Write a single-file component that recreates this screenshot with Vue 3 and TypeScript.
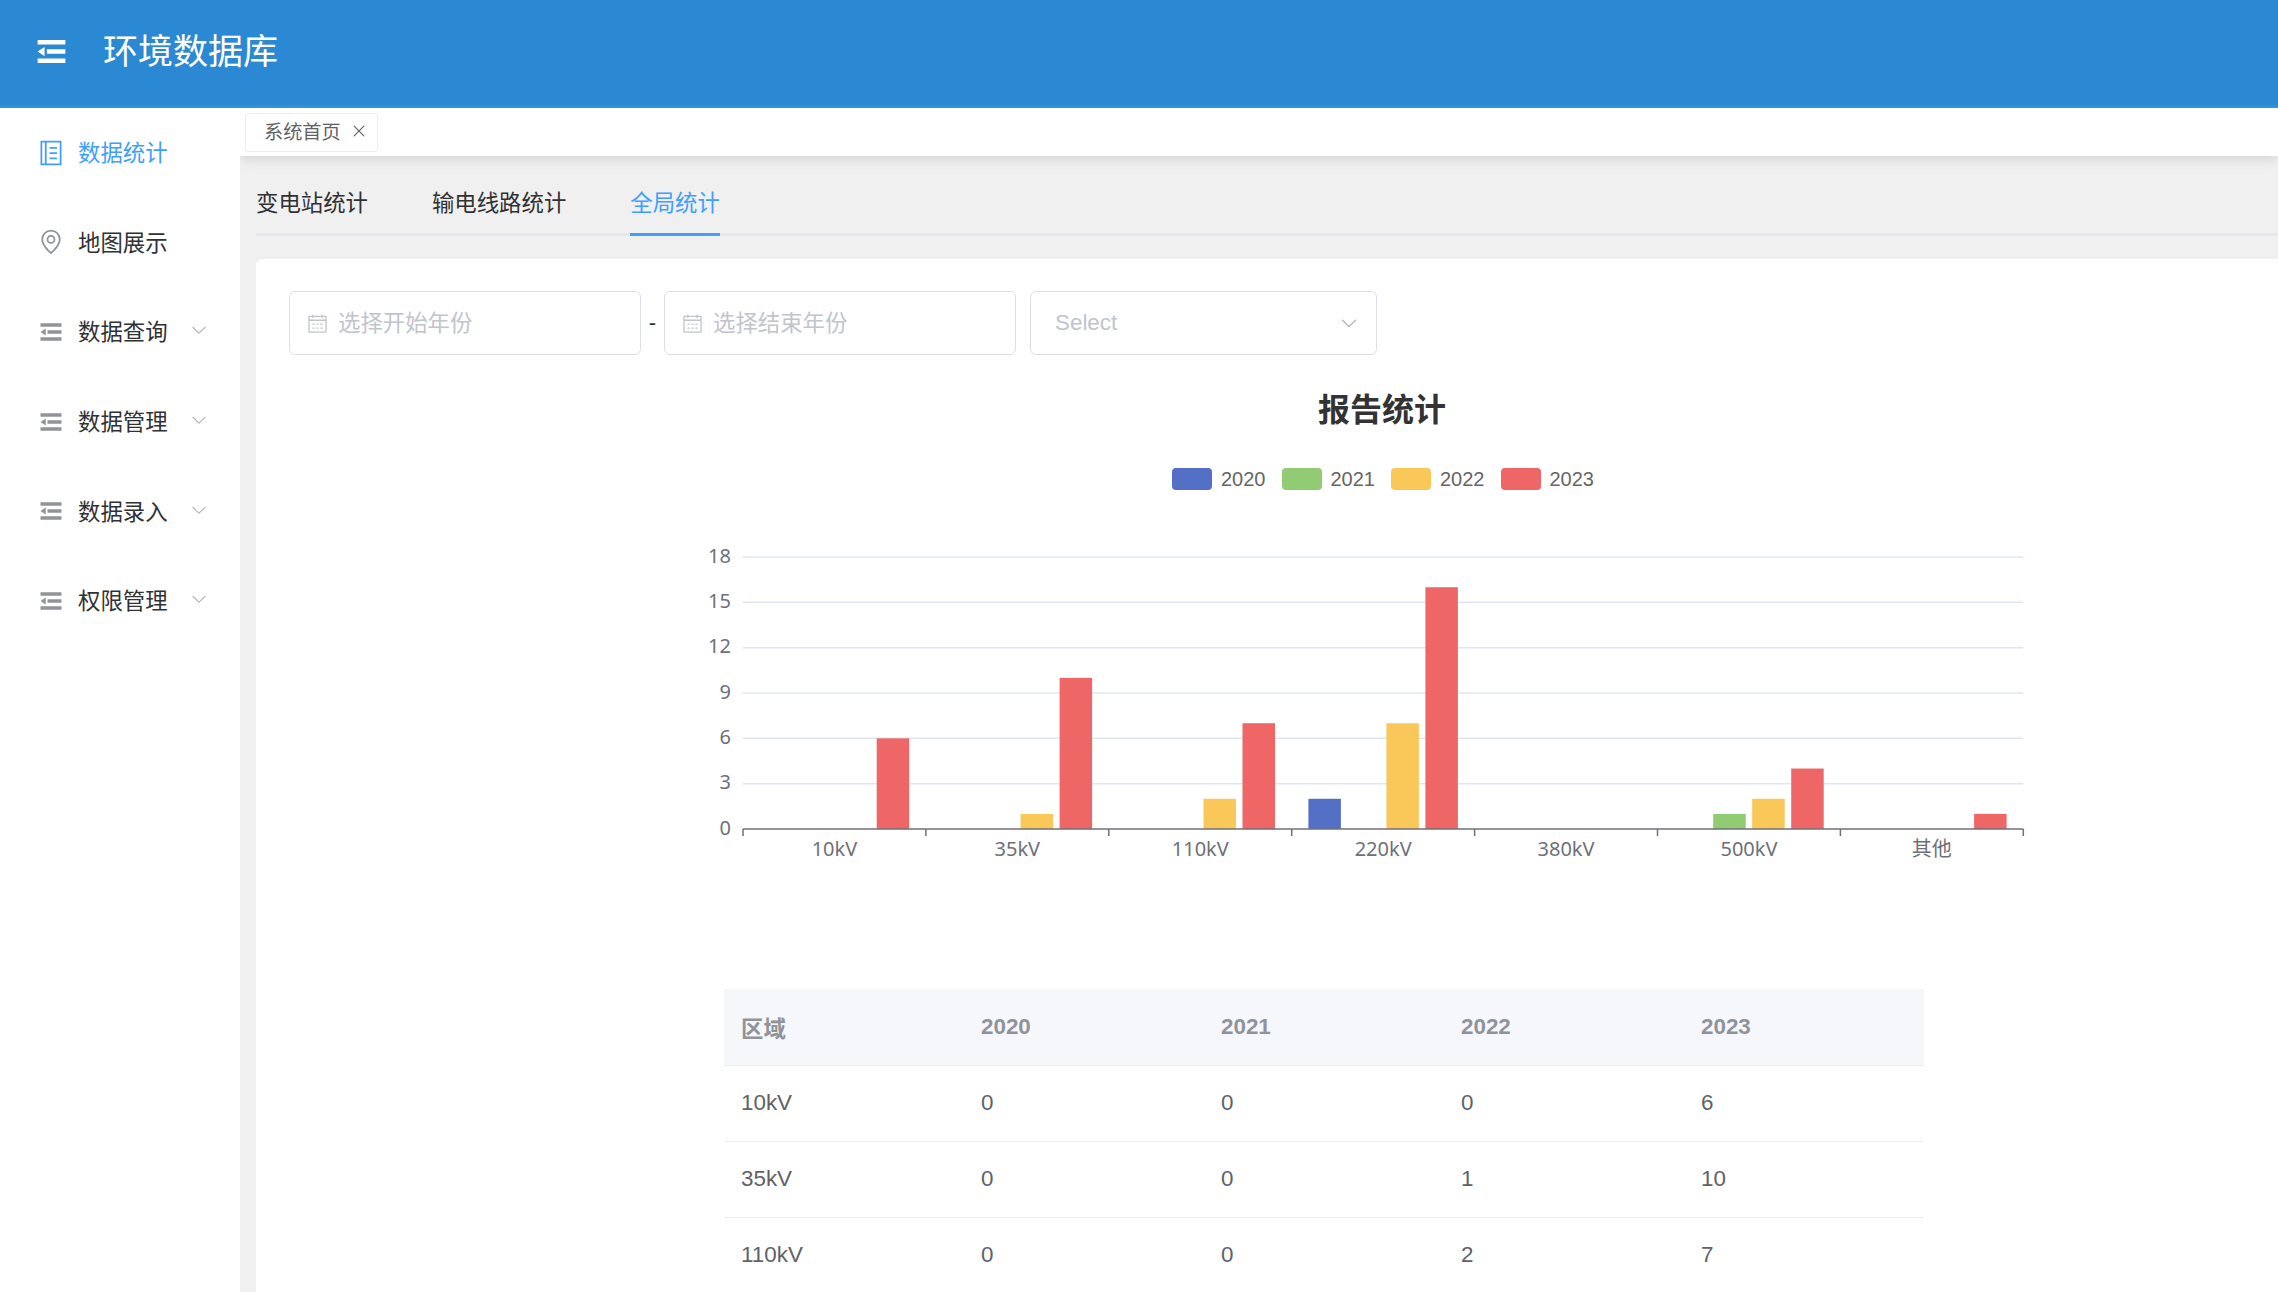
<script setup lang="ts">
interface MenuItem { label: string; icon: 'notebook' | 'location' | 'fold'; active?: boolean; arrow?: boolean }

const menu: MenuItem[] = [
  { label: '数据统计', icon: 'notebook', active: true },
  { label: '地图展示', icon: 'location' },
  { label: '数据查询', icon: 'fold', arrow: true },
  { label: '数据管理', icon: 'fold', arrow: true },
  { label: '数据录入', icon: 'fold', arrow: true },
  { label: '权限管理', icon: 'fold', arrow: true },
]
const tabs = ['变电站统计', '输电线路统计', '全局统计']

const foldPath = 'M896 192H128v128h768V192zm0 256H384v128h512V448zm0 256H128v128h768V704zM320 384L128 512l192 128V384z'
const arrowPath = 'M831.872 340.864 512 652.672 192.128 340.864a30.592 30.592 0 0 0-42.752 0 29.12 29.12 0 0 0 0 41.6L489.664 714.24a32 32 0 0 0 44.672 0l340.288-331.712a29.12 29.12 0 0 0 0-41.728 30.592 30.592 0 0 0-42.752 0z'
const calendarPath = 'M128 384v512h768V192H768v32a32 32 0 1 1-64 0v-32H320v32a32 32 0 0 1-64 0v-32H128v128h768v64H128zm192-256h384V96a32 32 0 1 1 64 0v32h160a32 32 0 0 1 32 32v768a32 32 0 0 1-32 32H96a32 32 0 0 1-32-32V160a32 32 0 0 1 32-32h160V96a32 32 0 0 1 64 0v32zm-32 384h64a32 32 0 0 1 0 64h-64a32 32 0 0 1 0-64zm0 192h64a32 32 0 1 1 0 64h-64a32 32 0 1 1 0-64zm192-192h64a32 32 0 0 1 0 64h-64a32 32 0 0 1 0-64zm0 192h64a32 32 0 1 1 0 64h-64a32 32 0 1 1 0-64zm192-192h64a32 32 0 1 1 0 64h-64a32 32 0 1 1 0-64zm0 192h64a32 32 0 1 1 0 64h-64a32 32 0 1 1 0-64z'
const closePath = 'M764.288 214.592 512 466.88 259.712 214.592a31.936 31.936 0 0 0-45.12 45.12L466.752 512 214.528 764.224a31.936 31.936 0 1 0 45.12 45.184L512 557.184l252.288 252.288a31.936 31.936 0 0 0 45.12-45.12L557.12 512.064l252.288-252.352a31.936 31.936 0 1 0-45.12-45.12z'

const years = ['2020', '2021', '2022', '2023']
const colors = ['#5470c6', '#91cc75', '#fac858', '#ee6666']
const cats = ['10kV', '35kV', '110kV', '220kV', '380kV', '500kV', '其他']
const data: number[][] = [
  [0, 0, 0, 6],
  [0, 0, 1, 10],
  [0, 0, 2, 7],
  [2, 0, 7, 16],
  [0, 0, 0, 0],
  [0, 1, 2, 4],
  [0, 0, 0, 1],
]

// Chart geometry, relative to the svg origin
const left = 63
const band = 182.9
const top = 8
const plotH = 272
const base = top + plotH
const barW = 32.5
const barGap = 6.5
const pad = (band - 4 * barW - 3 * barGap) / 2
const y = (v: number) => base - (v / 18) * plotH

const yTicks = [0, 3, 6, 9, 12, 15, 18]
const xTicks = Array.from({ length: 8 }, (_, i) => left + i * band)
const bars = data.flatMap((row, c) =>
  row.map((v, s) => ({ v, c, s }))
).filter((b) => b.v > 0).map((b) => ({
  x: left + b.c * band + pad + b.s * (barW + barGap),
  y: y(b.v),
  h: base - y(b.v),
  fill: colors[b.s],
  key: `${b.c}-${b.s}`,
}))

const rows = data.slice(0, 3).map((r, i) => [cats[i], ...r.map(String)])
</script>

<template>
  <div class="app">
    <header class="topbar">
      <svg class="fold" viewBox="0 0 1024 1024"><path fill="currentColor" :d="foldPath" /></svg>
      <h1 class="brand">环境数据库</h1>
    </header>
    <div class="body">
      <aside class="side">
        <div v-for="m in menu" :key="m.label" class="item" :class="{ active: m.active }">
          <svg class="mi" viewBox="0 0 1024 1024">
            <template v-if="m.icon === 'notebook'">
              <path fill="none" stroke="currentColor" stroke-width="64" d="M160 96h704v832H160z" />
              <path fill="none" stroke="currentColor" stroke-width="64" d="M320 96v832M460 320h270M460 512h270M460 704h270" />
            </template>
            <template v-else-if="m.icon === 'location'">
              <path fill="currentColor" d="M800 416a288 288 0 1 0-576 0c0 118.144 94.528 272.128 288 456.576C705.472 688.128 800 534.144 800 416zM512 960C277.312 746.688 160 565.312 160 416a352 352 0 0 1 704 0c0 149.312-117.312 330.688-352 544z" />
              <path fill="currentColor" d="M512 512a96 96 0 1 0 0-192 96 96 0 0 0 0 192zm0 64a160 160 0 1 1 0-320 160 160 0 0 1 0 320z" />
            </template>
            <path v-else fill="currentColor" :d="foldPath" />
          </svg>
          <span class="label">{{ m.label }}</span>
          <svg v-if="m.arrow" class="chev" viewBox="0 0 1024 1024"><path fill="currentColor" :d="arrowPath" /></svg>
        </div>
      </aside>
      <main class="main">
        <div class="tagbar">
          <div class="tag">
            <span>系统首页</span>
            <svg class="x" viewBox="0 0 1024 1024"><path fill="currentColor" :d="closePath" /></svg>
          </div>
        </div>
        <div class="content">
          <nav class="tabs">
            <span v-for="(t, i) in tabs" :key="t" class="tab" :class="{ on: i === 2 }">{{ t }}</span>
          </nav>
          <section class="card">
            <div class="filters">
              <div class="field date">
                <svg class="cal" viewBox="0 0 1024 1024"><path fill="currentColor" :d="calendarPath" /></svg>
                <span>选择开始年份</span>
              </div>
              <span class="dash">-</span>
              <div class="field date">
                <svg class="cal" viewBox="0 0 1024 1024"><path fill="currentColor" :d="calendarPath" /></svg>
                <span>选择结束年份</span>
              </div>
              <div class="field select">
                <span>Select</span>
                <svg class="sel-arrow" viewBox="0 0 1024 1024"><path fill="currentColor" :d="arrowPath" /></svg>
              </div>
            </div>
            <div class="viz">
              <h2 class="title">报告统计</h2>
              <div class="legend">
                <div v-for="(yr, i) in years" :key="yr" class="leg">
                  <i class="swatch" :style="{ background: colors[i] }"></i>
                  <span>{{ yr }}</span>
                </div>
              </div>
              <svg class="chart" width="1404" height="320" viewBox="0 0 1404 320">
                <g v-for="t in yTicks" :key="t">
                  <line v-if="t > 0" :x1="left" :x2="left + 7 * band" :y1="y(t)" :y2="y(t)" stroke="#e0e6f1" stroke-width="1.5" />
                  <text :x="left - 12" :y="y(t) + 5.5" text-anchor="end" class="axis-text">{{ t }}</text>
                </g>
                <rect v-for="b in bars" :key="b.key" :x="b.x" :y="b.y" :width="barW" :height="b.h" :fill="b.fill" />
                <line :x1="left" :x2="left + 7 * band" :y1="base" :y2="base" stroke="#6e7079" stroke-width="1.5" />
                <line v-for="x in xTicks" :key="x" :x1="x" :x2="x" :y1="base" :y2="base + 7" stroke="#6e7079" stroke-width="1.5" />
                <text v-for="(c, i) in cats" :key="c" :x="left + (i + 0.5) * band" :y="base + 27" text-anchor="middle" class="axis-text">{{ c }}</text>
              </svg>
            </div>
            <table class="grid">
              <thead>
                <tr>
                  <th>区域</th>
                  <th v-for="yr in years" :key="yr">{{ yr }}</th>
                </tr>
              </thead>
              <tbody>
                <tr v-for="r in rows" :key="r[0]">
                  <td v-for="(cell, j) in r" :key="j">{{ cell }}</td>
                </tr>
              </tbody>
            </table>
          </section>
        </div>
      </main>
    </div>
  </div>
</template>

<style>
html, body { margin: 0; padding: 0; overflow: hidden; }
</style>

<style scoped>
.app {
  width: 2278px;
  height: 1292px;
  overflow: hidden;
  display: flex;
  flex-direction: column;
  background: #f0f0f0;
  font-family: "Liberation Sans", "Noto Sans CJK SC", sans-serif;
  color: #303133;
}
.topbar {
  flex: none;
  height: 108px;
  display: flex;
  align-items: center;
  padding-left: 33px;
  box-sizing: border-box;
  background: linear-gradient(#2b88d3 0, #2b88d3 103px, #3c93d8 108px);
  color: #fff;
  position: relative;
  z-index: 3;
}
.fold { width: 37px; height: 37px; margin-right: 33px; margin-top: -6px; }
.brand { margin: -6px 0 0; font-size: 35px; font-weight: 400; line-height: 1; }
.body { flex: 1; min-height: 0; display: flex; }
.side { flex: none; width: 240px; background: #fff; position: relative; z-index: 2; }
.item {
  height: 89.6px;
  display: flex;
  align-items: center;
  padding-left: 37px;
  box-sizing: border-box;
  font-size: 22.4px;
  color: #303133;
}
.item .mi { width: 28px; height: 28px; color: #909399; margin-right: 13px; flex: none; }
.item.active, .item.active .mi { color: #409eff; }
.label { width: 90px; flex: none; margin-top: -3px; }
.chev { width: 18px; height: 18px; color: #a8abb2; margin-left: 22px; margin-top: -3px; }
.main { flex: 1; min-width: 0; display: flex; flex-direction: column; }
.tagbar {
  flex: none;
  height: 48px;
  padding: 5px 0 0 5px;
  box-sizing: border-box;
  background: #fff;
  box-shadow: 0 3px 12px rgba(0, 0, 0, 0.12);
  position: relative;
}
.tag {
  width: 133px;
  height: 39px;
  box-sizing: border-box;
  border: 1px solid #ebeef5;
  border-radius: 3px;
  display: flex;
  align-items: center;
  padding-left: 18px;
  font-size: 19.2px;
  color: #606266;
}
.tag span { margin-top: -3px; }
.x { width: 18px; height: 18px; margin-left: 9px; margin-top: -3px; }
.content { flex: 1; min-height: 0; padding: 0 0 0 16px; display: flex; flex-direction: column; }
.tabs {
  flex: none;
  height: 80px;
  display: flex;
  gap: 64px;
  box-sizing: border-box;
  border-bottom: 3px solid #e4e7ed;
}
.tab {
  font-size: 22.4px;
  line-height: 1;
  padding-top: 37px;
  height: 80px;
  box-sizing: border-box;
  color: #303133;
}
.tab.on { color: #409eff; border-bottom: 3px solid #409eff; }
.card {
  flex: 1;
  margin-top: 23px;
  background: #fff;
  border-radius: 6px 0 0 0;
  padding: 32px 0 0 33px;
  min-height: 0;
  overflow: hidden;
}
.filters { display: flex; align-items: center; height: 64px; }
.field {
  height: 64px;
  box-sizing: border-box;
  border: 1.5px solid #dcdfe6;
  border-radius: 6px;
  display: flex;
  align-items: center;
  font-size: 22.4px;
  color: #c0c4cc;
}
.date { width: 352px; padding-left: 17px; }
.date span { margin-top: -5px; }
.cal { width: 21px; height: 21px; margin-right: 10px; flex: none; }
.dash { width: 23px; text-align: center; font-size: 22px; color: #303133; }
.select {
  width: 347px;
  margin-left: 14px;
  padding: 0 17px 0 24px;
  justify-content: space-between;
}
.sel-arrow { width: 20px; height: 20px; color: #a8abb2; }
.viz { margin: 36px 0 0 391px; width: 1404px; }
.title {
  margin: 0;
  text-align: center;
  font-size: 32px;
  font-weight: 700;
  line-height: 38px;
  color: #333;
}
.legend {
  display: flex;
  justify-content: center;
  gap: 16px;
  margin-top: 39px;
  padding-left: 2px;
}
.leg { display: flex; align-items: center; gap: 9px; font-size: 20px; color: #666; height: 22px; }
.swatch { display: block; width: 40px; height: 22px; border-radius: 4px; }
.chart { display: block; margin-top: 59px; }
.axis-text { font-family: "Noto Sans", "Noto Sans CJK SC", sans-serif; font-size: 20px; fill: #6e7079; }
.grid {
  margin: 120px 0 0 435px;
  width: 1200px;
  border-collapse: collapse;
  table-layout: fixed;
  font-size: 22.4px;
}
.grid th, .grid td {
  height: 76px;
  padding: 0 17px;
  text-align: left;
  box-sizing: border-box;
  border-bottom: 1px solid #ebeef5;
}
.grid th { background: #f5f7fa; color: #909399; font-weight: 700; }
.grid td { color: #606266; }
</style>
